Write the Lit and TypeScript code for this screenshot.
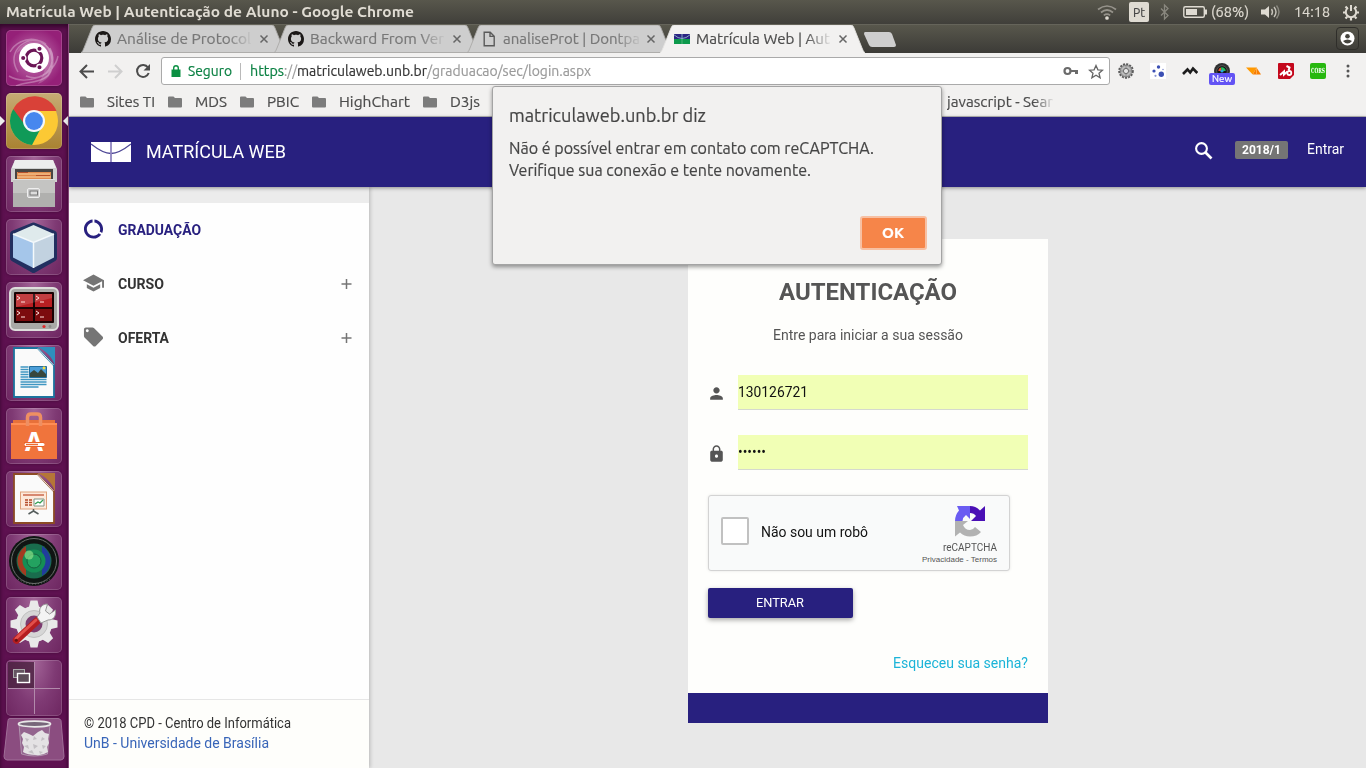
import { LitElement, html, css, svg } from "lit";
import { customElement, property } from "lit/decorators.js";

/** Single-line text set to an exact width; glyphs are condensed or expanded to fill it. */
@customElement("fit-label")
class FitLabel extends LitElement {
  @property({ type: Number }) w = 0;
  @property() text = "";
  static styles = css`
    :host { display: inline-block; flex: none; white-space: nowrap; }
    .box { display: block; }
    .run { display: inline-block; transform-origin: 0 50%; white-space: pre; }
  `;
  render() {
    return html`<span class="box" style="width:${this.w}px"><span class="run">${this.text}</span></span>`;
  }
  updated() {
    const run = this.renderRoot.querySelector(".run") as HTMLElement;
    const natural = run.offsetWidth ? run.getBoundingClientRect().width : 0;
    if (natural && this.w) run.style.transform = `scaleX(${this.w / natural})`;
  }
}

const fit = (text: string, w: number, cls = "") =>
  html`<fit-label class=${cls} .text=${text} .w=${w}></fit-label>`;

const octocat = svg`<path fill="#1b1817" d="M8 0C3.58 0 0 3.58 0 8c0 3.54 2.29 6.53 5.47 7.59.4.07.55-.17.55-.38 0-.19-.01-.82-.01-1.49-2.01.37-2.53-.49-2.69-.94-.09-.23-.48-.94-.82-1.13-.28-.15-.68-.52-.01-.53.63-.01 1.08.58 1.23.82.72 1.21 1.87.87 2.33.66.07-.52.28-.87.51-1.07-1.78-.2-3.64-.89-3.64-3.95 0-.87.31-1.59.82-2.15-.08-.2-.36-1.02.08-2.12 0 0 .67-.21 2.2.82.64-.18 1.32-.27 2-.27s1.36.09 2 .27c1.53-1.04 2.2-.82 2.2-.82.44 1.1.16 1.92.08 2.12.51.56.82 1.27.82 2.15 0 3.07-1.87 3.75-3.65 3.95.29.25.54.73.54 1.48 0 1.07-.01 1.93-.01 2.2 0 .21.15.46.55.38A8.01 8.01 0 0 0 16 8c0-4.42-3.58-8-8-8z"/>`;
const docIcon = svg`<path fill="none" stroke="#5a5a5a" stroke-width="1.4" d="M3.2 1.2h6l4 4v9.6h-10zM9 1.2v4.2h4.2"/>`;
const unbIcon = svg`<path fill="#2b2483" d="M0 3h16v5H0z"/><path fill="#0d9a4c" d="M0 8h16v5H0z"/><path fill="none" stroke="#8fb4cc" stroke-width=".9" d="M0 3.8Q4 7.5 8 7.5T16 3.8M8 3v5"/><path stroke="#7cc79a" stroke-width=".6" d="M8 8v5"/>`;

const tabs = [
  { text: "Análise de Protocol", w: 134, icon: octocat },
  { text: "Backward From Ver", w: 134, icon: octocat },
  { text: "analiseProt | Dontpa", w: 137, icon: docIcon },
  { text: "Matrícula Web | Aut", w: 134, icon: unbIcon, active: true },
];

const bookmarks: [string, number][] = [
  ["Sites TI", 48], ["MDS", 32], ["PBIC", 32], ["HighChart", 71], ["D3js", 30],
];

const extensions = [
  svg`<circle cx="8" cy="8" r="6.8" fill="#b5b5b5" stroke="#5b5b5b" stroke-width="2" stroke-dasharray="2 1.2"/><circle cx="8" cy="8" r="5.6" fill="#bbb" stroke="#858585"/><circle cx="8" cy="8" r="2.6" fill="#e5e5e5" stroke="#666"/><path stroke="#888" d="M8 3v2.5M8 10.500v2.5M3 8h2.500M10.500 8H13"/>`,
  svg`<path fill="#fff" d="M0 0h16v16H0z"/><circle cx="8.500" cy="4" r="1.700" fill="#3c50b4"/><circle cx="4" cy="8" r="1.600" fill="#3c50b4"/><circle cx="11.300" cy="11.200" r="2.700" fill="#3c50b4"/><circle cx="5.500" cy="12.800" r="1.100" fill="#8995d2"/><circle cx="13" cy="6.500" r=".8" fill="#8995d2"/>`,
  svg`<path fill="none" stroke="#1d1d1d" stroke-width="2.600" d="M1 11l4.500-4.500 2.700 3L11 5.500l4.300 4.500"/>`,
  svg`<circle cx="8" cy="8" r="8" fill="#303030"/><circle cx="8" cy="8" r="5.300" fill="#151515" stroke="#777" stroke-width=".6"/><path d="M4.300 8a3.700 3.700 0 0 1 2.500-3.500L8 8z" fill="#e53"/><path d="M6.800 4.500A3.700 3.700 0 0 1 11.700 8H8z" fill="#1fc05a"/><circle cx="8" cy="8" r="1.600" fill="#2aa7e0"/>`,
  svg`<path fill="#f90" d="M0 4.500h10.500L6.700 11.500z"/><path fill="#f97d00" d="M10.500 4.500l4.500 7H6.800z"/><path stroke="#ffbd64" stroke-width=".7" d="M10.500 4.500v7"/>`,
  svg`<path fill="#c4081c" d="M0 1q0-1 1-1h14q1 0 1 1v11l-4 4H1q-1 0-1-1z"/><path fill="none" stroke="#fff" stroke-width="2" d="M2 12l4-3.500v3l3.500-3"/><path fill="none" stroke="#fff" stroke-width="2" d="M8.500 3l3 1.500-1 3"/><circle cx="11.300" cy="10" r="2" fill="none" stroke="#fff" stroke-width="1.800"/>`,
  svg`<rect width="16" height="16" rx="2" fill="#27b80f"/>`,
];

const gearTooth = [0, 45, 90, 135, 180, 225, 270, 315].map((a) => svg`<path transform="rotate(${a} 28 27)" d="M22.500 12l2-8.500h7l2 8.500z"/>`);

const sheet = (edge: string, fold: string) => svg`
  <path fill="#fafafa" stroke="${edge}" stroke-width="1.800" d="M8 3h23.500L48 20.500V52H8z"/>
  <path fill="${fold}" d="M31.500 2H49v18.500C46 12 40 5.500 31.500 2z"/>
  <path stroke="#fff" stroke-width=".8" fill="none" d="M32 3.500l15.500 16.500"/>`;

const launcher = [
  { cls: "dash", art: svg`
    <g fill="none" stroke="#fff" stroke-opacity=".3" stroke-width="1.500"><path d="M4 22C14 4 44 4 46 30S22 50 10 56M12 42C-2 20 24 2 40 14M20 46c20 8 32-14 24-28M3 46C20 56 48 46 52 26"/></g>
    <path fill="#fff" fill-opacity=".18" d="M10 24C18 4 50 8 48 34 46 44 42 50 32 54 52 24 30 4 10 24z"/>
    <circle cx="28" cy="28" r="15" fill="#fff"/><circle cx="28" cy="28" r="7.800" fill="none" stroke="#6b1556" stroke-width="3.200"/>
    <g fill="#6b1556" stroke="#fff" stroke-width="1.300"><circle cx="17.200" cy="28" r="2.700"/><circle cx="33.500" cy="18.800" r="2.700"/><circle cx="33.500" cy="37.200" r="2.700"/></g>` },
  { cls: "chrome", art: svg`
    <circle cx="28" cy="28" r="24" fill="#fcc934"/><path fill="#d94138" d="M28 28L7.200 16A24 24 0 0 1 50.500 18H28z"/>
    <path fill="#109a58" d="M7.200 16A24 24 0 0 0 26 51.900L36 33 28 28z"/><path fill="#d94138" d="M7.200 16L20.500 34 28 18z"/>
    <circle cx="28" cy="28" r="11" fill="#f5f7fa"/><circle cx="28" cy="28" r="8.900" fill="#4787ee"/>` },
  { cls: "", art: svg`
    <path fill="#d0d0d0" d="M9 4h38l4 9v13H5V13z"/><path fill="#ededed" d="M9 4h38l3 8H6z"/><path fill="#484543" d="M9 13h38v12H9z"/>
    <path fill="#e08a4c" d="M11 16h34v8H11z"/><path stroke="#f9d3a0" d="M12 18h32M11 21h34"/><path stroke="#b5502a" d="M12 16.500h10M30 19.500h14"/><path fill="#b0b0ae" d="M7 23h42v28H7z"/><path fill="#c4c4c2" d="M7 23h42v14H7z"/><path stroke="#ddd" d="M7 23.500h42"/>
    <rect x="21.500" y="32.500" width="12" height="9" rx="1.500" fill="#c8c8c8" stroke="#efefef"/><rect x="24" y="35" width="7.500" height="4" fill="#ddd" stroke="#777"/>` },
  { cls: "", art: svg`
    <path fill="#222f60" stroke="#222f60" stroke-width="7" stroke-linejoin="round" d="M27.500 7l20 8v24l-20 11.500L7.500 39V15z"/>
    <path fill="#dfeaec" d="M27.500 6l20.500 9-20.500 8.500L7 15z"/><path fill="#a5c6ea" d="M7 15l20.500 8.500V49L7 38.500z"/><path fill="#c2d2e0" d="M48 15l-20.500 8.500V49L48 38.500z"/><path stroke="#f4f9fc" stroke-width="1.500" fill="none" d="M7 15l20.500 8.500L48 15M27.500 24v25"/>` },
  { cls: "", art: svg`
    <rect x="4" y="6" width="48" height="42" rx="5" fill="#a9a9a6" stroke="#dededc" stroke-width="2"/><rect x="8" y="10" width="40" height="31" rx="1" fill="#190203"/>
    <path fill="#b91f22" d="M10 12h17v13H10zM29 12h17v13H29z"/><path fill="#7c0c0e" d="M10 27h17v12H10zM29 27h17v12H29z"/><path fill="#fff" fill-opacity=".14" d="M10 12h36v4L10 25z"/>
    <path fill="none" stroke="#ffe1dc" d="M11 14l3 2-3 2M15 20h4M30 14l3 2-3 2M34 20h4M11 29l3 2-3 2M15 35h4M30 29l3 2-3 2M34 35h4"/><circle cx="38" cy="44.500" r="1.600" fill="#e02828"/><circle cx="44" cy="44.500" r="1.400" fill="#8b8b88"/>` },
  { cls: "", art: svg`${sheet("#1c739e", "#2f8fbd")}
    <path stroke="#3f96c2" stroke-width="1.500" d="M14.500 22h8M14.500 24.500h8M14.500 27h8M14.500 29.500h8M14.500 32h8M14.500 34.500h26M14.500 37h26M14.500 39.500h26M14.500 42h18"/><path fill="#4b9ed8" stroke="#236d9c" d="M23.500 21.500h17v11h-17z"/><path fill="#37473d" d="M24 32v-4l4-3 4 3 3-4 5 5v3z"/><circle cx="38" cy="23" r="1.400" fill="#f9de3c"/>` },
  { cls: "", art: svg`
    <path fill="#e7713a" d="M7 12h42v6H7z"/><path fill="#f0743c" d="M5 15h46v36H5z"/><path fill="#ff8d55" d="M5 15h46v2H5z"/><path fill="none" stroke="#ee8f62" stroke-width="3.500" d="M21.500 18V9.500q0-3.500 3.500-3.500h6q3.500 0 3.500 3.500V18"/>
    <text x="28" y="43" text-anchor="middle" font-family="Noto Sans, sans-serif" font-weight="700" font-size="26" fill="#fff">A</text><path stroke="#e96328" stroke-width="5" d="M18 36.500h20"/><path stroke="#fff" stroke-width="3" stroke-linecap="round" d="M20 36.500h17"/><path stroke="#ee6c31" stroke-width="1.500" d="M20 36.500h12"/>` },
  { cls: "", art: svg`${sheet("#8c4b25", "#b57638")}
    <rect x="14.500" y="21" width="26" height="17" fill="#fde9db" stroke="#dfa17a"/><path stroke="#be4829" stroke-width="1.200" d="M17 24h21"/><path stroke="#b44b29" stroke-dasharray="3 1" stroke-width="1.300" d="M19 29h7M19 31.500h7M19 34h7"/><path fill="#fff" stroke="#819285" d="M28 28h10v7H28z"/><path fill="none" stroke="#32a052" stroke-width="1.300" d="M29 33l3-2 2 1 3-3"/><path fill="none" stroke="#555d5c" stroke-width="1.500" d="M27.500 38v2l-5 3M27.500 40l5 3"/>` },
  { cls: "", art: svg`
    <circle cx="28" cy="27" r="25" fill="#101513"/><circle cx="28" cy="27" r="22.500" fill="none" stroke="#6a706b" stroke-width="1"/><circle cx="28" cy="27" r="17.500" fill="#196c4d"/>
    <path fill="#a33b20" d="M20 12a17.500 17.500 0 0 0 0 30z"/><path fill="#203c9c" d="M36 12a17.500 17.500 0 0 1 0 30z"/><circle cx="28" cy="27" r="11.500" fill="#158e55"/><circle cx="28" cy="27" r="7" fill="#23a260" stroke="#14603e"/><circle cx="23" cy="21" r="4.500" fill="#8ae087" fill-opacity=".7"/><path d="M12 45q16 10 32 0" fill="none" stroke="#777" stroke-dasharray="1 2"/>` },
  { cls: "", art: svg`
    <g fill="#e9e9e9">${gearTooth}<circle cx="28" cy="27" r="18"/></g><circle cx="28" cy="27" r="13.500" fill="#d6d6d6" stroke="#c0c0c0"/><circle cx="28" cy="27" r="8.500" fill="#7c3c70"/>
    <path stroke="#b51d20" stroke-width="7.500" stroke-linecap="round" d="M10.500 43L31 24"/><path stroke="#e2504b" stroke-width="3" stroke-linecap="round" d="M10 41.500L30 23"/><circle cx="10.300" cy="43.300" r="1.500" fill="#641013"/>
    <path fill="#f4f4f4" stroke="#999" d="M31 20l4 6 7-3c6 0 8-4 7.500-10l-6 4-4-3 2-7c-6 0-9 5-7.500 9z"/>` },
  { cls: "grid", art: svg`
    <path fill="#4a213f" fill-opacity=".8" d="M2 2h26v26H2z"/><path stroke="#b28aab" d="M28.500 2v52M2 28.500h52"/><rect x="7.500" y="9.500" width="11" height="8" fill="#655461" stroke="#aaa"/><rect x="11.500" y="13.500" width="12" height="9" fill="#5e4d5a" stroke="#fff" stroke-width="1.400"/>` },
];

@customElement("app-root")
class AppRoot extends LitElement {
  static styles = css`
    :host { display: grid; grid-template: 24px 744px / 69px 1297px; width: 1366px; height: 768px; overflow: hidden; position: relative;
      font-family: Roboto, "Liberation Sans", sans-serif; font-size: 14px; line-height: 20px; color: #333; }
    * { box-sizing: border-box; }
    svg { display: block; flex: none; }
    .ui { font-family: Ubuntu, "Noto Sans", sans-serif; -webkit-text-stroke: .2px currentColor; }
    .row { display: flex; align-items: center; }

    .panel { grid-column: 1 / 3; background: linear-gradient(#58574c, #403f3a); color: #dfdbd2; padding: 0 7px 0 6px; font-size: 15px; justify-content: space-between; }
    .panel .name { font-weight: 700; -webkit-text-stroke: 0; }
    .status { display: flex; align-items: center; }
    .status svg { overflow: visible; }
    .kbd { width: 20px; height: 20px; margin: 0 10px 0 12px; border-radius: 2px; background: #dfdbd2; color: #444; font-size: 13px; display: grid; place-items: center; }
    .pct { margin-left: 4px; } .vol { margin: 0 13px 0 12px; } .cog { margin-left: 12px; }

    .dock { background: #5e1150; border-right: 1px solid #8b4a7e; padding: 6px 0 0 6px; display: flex; flex-direction: column; gap: 7px; box-shadow: inset 0 3px 4px #34062b; }
    .tile { width: 56px; height: 56px; flex: none; border-radius: 5px; background: radial-gradient(ellipse at 50% 0, #a46699, #7f3a74 55%, #6d2660); box-shadow: inset 0 0 0 1px rgba(255,255,255,.16), 0 0 3px #450b3b; position: relative; }
    .dash { background: radial-gradient(circle, #c57ab4, #952078 75%); }
    .chrome { background: linear-gradient(#c6ab75, #a98231); }
    .pip { position: absolute; top: 23px; }
    .pip.l { left: -6px; } .pip.r { right: -6px; }
    .bin { margin: -5px 0 0 -3px; }

    .browser { display: flex; flex-direction: column; min-width: 0; }
    .strip { height: 29px; flex: none; background: linear-gradient(#58574c, #3c3b37); border-top: 1px solid #65645a; padding: 0 7px 0 12px; display: flex; }
    .tab { width: 205px; margin-right: -12px; display: grid; flex: none; height: 28px; color: #777; font-size: 15px; }
    .tab > * { grid-area: 1 / 1; }
    .tab .in { display: flex; align-items: center; padding: 0 17px 0 14px; gap: 6px; }
    .tab.on { color: #4c4c4c; z-index: 1; }
    .fade { -webkit-mask-image: linear-gradient(90deg, #000 82%, transparent 102%); mask-image: linear-gradient(90deg, #000 82%, transparent 102%); overflow: hidden; }
    .x { margin-left: auto; }
    .newtab { margin: 7px 0 0 10px; }
    .user { margin: 2px 0 0 auto; width: 23px; height: 23px; border: 1px solid #2f2e2a; border-radius: 4px; display: grid; place-items: center; }

    .tools { height: 35px; flex: none; background: #f2f1f0; padding: 0 16px 0 10px; display: flex; align-items: center; }
    .tools > .nav { margin-right: 12px; }
    .tools > .reload { margin-right: 10px; }
    .omni { width: 949px; height: 28px; border: 1px solid #aaa; border-radius: 3px; background: #fff; margin: 1px 8px 0 0; padding: 0 5px 0 9px; color: #9a9a9a; font-size: 15px; flex: none; }
    .green { color: #0b8043; } .dark { color: #333; }
    .sp { width: 7px; }
    .bar { width: 1px; height: 17px; background: #b9b9b9; margin: 0 9px 0 8px; }
    .key { margin-left: auto; margin-right: 9px; }
    .exts { display: flex; gap: 16px; }
    .ext { position: relative; }
    .badge { position: absolute; left: -5px; top: 10px; width: 26px; height: 12px; border-radius: 2px; background: #6353f4; color: #fff; font-size: 10px; line-height: 12px; padding-left: 3px; }
    .cors { position: absolute; left: 1px; top: 3px; font: 700 7px/10px "DejaVu Serif", serif; color: #fff; -webkit-text-stroke: 0; }
    .menu { margin-left: auto; }
    .marks { height: 29px; flex: none; background: #f2f1f0; border-bottom: 1px solid #b8b8b8; padding: 0 0 0 11px; color: #4c4c4c; font-size: 15px; }
    .mark { display: flex; align-items: center; gap: 13px; margin-right: 13px; }
    .last { margin-left: 438px; }

    .page { flex: 1; background: #e8e8e8; display: flex; flex-direction: column; min-height: 0; }
    .head { height: 70px; flex: none; background: #28207f; color: #fff; padding: 0 22px; box-shadow: 0 1px 4px rgba(0,0,0,.4); z-index: 1; }
    .brand { font-size: 18px; margin-left: 15px; }
    .find { margin: -4px 22px 0 auto; }
    .term { width: 53px; height: 18px; background: #757575; border-radius: 2px; font-size: 12px; line-height: 18px; font-weight: 700; padding-left: 7px; margin: -4px 19px 0 0; }
    .login { margin-top: -6px; }
    .body { flex: 1; display: flex; min-height: 0; }
    .side { width: 300px; flex: none; background: #fefefe; border-top: 16px solid #ececec; box-shadow: 1px 0 4px rgba(0,0,0,.22); display: flex; flex-direction: column; }
    .item { height: 54px; padding: 0 17px 2px 14px; font-weight: 700; }
    .item fit-label { margin: 2px 0 0 14px; }
    .item .plus { margin-left: auto; }
    .cur { color: #28207f; }
    .foot { margin-top: auto; height: 69px; border-top: 1px solid #e6e6e6; padding: 13px 15px 0; display: flex; flex-direction: column; align-items: flex-start; background: #fefefb; }
    .foot .unb { color: #3865b8; }
    .main { flex: 1; padding: 52px 0 0 319px; }
    .card { width: 360px; height: 484px; background: #fefefc; border-bottom: 30px solid #28207f; padding: 36px 20px 0; display: flex; flex-direction: column; align-items: flex-start; color: #555; }
    .h1 { align-self: center; font-size: 24px; line-height: 34px; font-weight: 700; margin-left: -1px; }
    .sub { align-self: center; margin: 16px 0 30px -1px; }
    .field { display: flex; align-items: center; gap: 13px; height: 35px; margin-bottom: 25px; }
    .field > svg { margin-top: 2px; }
    .input { width: 290px; height: 35px; background: #f1ffb5; border-bottom: 1px solid #d5d9cf; color: #111; padding-top: 7px; }
    .captcha { width: 302px; height: 76px; border: 1px solid #d3d3d3; border-radius: 3px; background: #f9fafa; box-shadow: 0 0 3px rgba(0,0,0,.1); display: flex; padding: 0 12px; align-items: center; color: #111; }
    .check { width: 28px; height: 28px; border: 2px solid #c1c1c1; border-radius: 2px; background: #fff; margin-right: 12px; margin-top: -4px; }
    .robot { margin-top: -2px; }
    .rc { margin-left: auto; display: flex; flex-direction: column; align-items: flex-end; color: #555; height: 76px; padding-top: 10px; }
    .rc svg { margin-right: 11px; }
    .rcn { font-size: 10px; line-height: 13px; margin-top: 4px; }
    .rcp { font: 8px/11px "Liberation Sans", sans-serif; }
    .go { width: 145px; height: 30px; background: #28207f; border-radius: 2px; color: #fff; font-size: 13px; display: grid; place-items: center; margin: 17px 0 35px; padding-right: 1px; box-shadow: 0 2px 5px rgba(0,0,0,.35); }
    .forgot { align-self: flex-end; color: #1cb4d8; }

    .dialog { position: absolute; z-index: 5; left: 492px; top: 86px; width: 450px; height: 179px; background: #f2f1f0; border: 1px solid #a4a4a4; border-radius: 3px; box-shadow: 0 2px 4px rgba(0,0,0,.4); padding: 16px; display: flex; flex-direction: column; align-items: flex-start; color: #454545; font-size: 16px; line-height: 22px; }
    .dialog .t { font-size: 19px; line-height: 24px; margin-bottom: 10px; }
    .ok { align-self: flex-end; margin: auto -2px -2px 0; width: 67px; height: 34px; border: 2px solid #f7c0a3; border-radius: 3px; background: #f68549; color: #fff; font-size: 14px; font-weight: 700; display: grid; place-items: center; padding-right: 1px; }
  `;

  tab(t: any) {
    const fill = t.active ? "#f2f1f0" : "#cecece";
    return html`<div class="tab ${t.active ? "on" : ""}">
      <svg width="205" height="28"><path d="M0 28Q2 26 3 23L11 3Q12 0 14 0H191Q193 0 194 3L202 23Q203 26 205 28z" fill=${fill}/>
        <path d="M0 28Q2 26 3 23L11 3Q12 0 14 0H191Q193 0 194 3L202 23Q203 26 205 28${t.active ? "" : "M0 27.500H205"}" fill="none" stroke=${t.active ? "#e4e3e1" : "#aaa9a7"} stroke-width=".9"/></svg>
      <div class="in"><svg width="16" height="16" viewBox="0 0 16 16">${t.icon}</svg>${fit(t.text, t.w, "fade")}
      <svg class="x" width="10" height="10"><path d="M1.500 1.500l7 7m0-7l-7 7" stroke="#666" stroke-width="1.500"/></svg></div></div>`;
  }

  item(label: string, w: number, icon: any, current = false) {
    return html`<div class="item row ${current ? "cur" : ""}">
      <svg width="21" height="22" viewBox="1 1 22 22" fill=${current ? "#28207f" : "#757575"}>${icon}</svg>${fit(label, w)}
      ${current ? "" : html`<svg class="plus" width="11" height="11"><path d="M5.500 1v10M.5 6h10" stroke="#757575" stroke-width="1.500"/></svg>`}</div>`;
  }

  extension(art: any, i: number) {
    return html`<div class="ext"><svg width="16" height="16" viewBox="0 0 16 16">${art}</svg>
      ${i === 3 ? html`<div class="badge">${fit("New", 20)}</div>` : ""}${i === 6 ? html`<div class="cors">${fit("CORS", 14)}</div>` : ""}</div>`;
  }

  render() {
    return html`
      <div class="panel ui row">
        ${fit("Matrícula Web | Autenticação de Aluno - Google Chrome", 408, "name")}
        <div class="status">
          <svg width="20" height="16" fill="none" stroke="#96938b" stroke-width="1.700"><path d="M1 5.500q9-7 18 0M4 8.500q6-5 12 0M6.800 11.300q3.200-2.500 6.400 0"/><circle cx="10" cy="14" r="1" fill="#dfdbd2" stroke="#dfdbd2"/></svg>
          <div class="kbd">${fit("Pt", 12)}</div>
          <svg width="12" height="16" fill="none" stroke="#8a887f" stroke-width="1.300"><path d="M2 4.500l7 7-3.500 3.500V1L9 4.500l-7 7"/></svg>
          <svg width="36" height="14" viewBox="-12 0 36 14"><rect x=".8" y="1.800" width="20.500" height="10.400" rx="1.500" fill="none" stroke="#dfdbd2" stroke-width="1.400"/><path fill="#dfdbd2" d="M3 4h11v6H3zM22 4.500h2v5h-2z"/></svg>
          ${fit("(68%)", 38, "pct")}
          <svg class="vol" width="20" height="16"><path fill="#dfdbd2" d="M0 5.500h4L8 2v12L4 10.500H0z"/><path fill="none" stroke="#c6c3ba" stroke-width="1.400" d="M10.500 5q2 3 0 6M13 3q4 5 0 10"/><path fill="none" stroke="#8a887f" stroke-width="1.400" d="M15.500 1.500q5 6.500 0 13"/></svg>
          ${fit("14:18", 36)}
          <svg class="cog" width="17" height="18" fill="none" stroke="#dfdbd2"><path stroke-width="2" d="M6 4.800A5.200 5.200 0 1 0 12 4.800"/><path stroke-width="2" d="M9 2v6"/><path stroke-width="2.200" d="M3.500 3.500l1.700 1.700M14.500 3.500l-1.700 1.700M1 9.500h2.500M14.500 9.500H17M3.500 15.500l1.700-1.700M14.500 15.500l-1.700-1.700M9 15v2.500"/></svg>
        </div>
      </div>

      <div class="dock">
        ${launcher.map((l) => html`<div class="tile ${l.cls}"><svg width="56" height="56" viewBox="0 0 56 56">${l.art}</svg>
          ${l.cls === "chrome" ? html`<svg class="pip l" width="5" height="10"><path fill="#eee" d="M0 0l5 5-5 5z"/></svg><svg class="pip r" width="5" height="10"><path fill="#eee" d="M5 0L0 5l5 5z"/></svg>` : ""}</div>`)}
        <svg class="bin" width="62" height="43"><path fill="#8b4d80" stroke="#a06f98" d="M7 .5h48q2 0 3 2l3 36q0 3-3 3.500H4q-3-.5-3-3.500l4-36q0-2 2-2z"/>
          <path fill="#9a7597" fill-opacity=".6" stroke="#b9a3b8" stroke-width=".8" d="M16 6h31l-2.500 30q-13 4-26 0z"/><ellipse cx="31.500" cy="6" rx="16" ry="2.800" fill="#77667a" stroke="#e8e8e8" stroke-width="1.700"/>
          <path fill="#e4e2e4" d="M18 17l3-3 5 2 4 2 5-4 4-2 3 3 4 1-1 5 1 4-2 4 1 5q-6 4-12 3-9 0-13-3l1-5-2-4 1-4z"/><g fill="#c3c0c4"><path d="M22 20l4 1-2 3zM31 18l3 3-4 1zM39 19l3 2-4 2zM21 28l4-1 1 4zM30 26l5 2-4 3zM39 27l4 1-3 3zM25 34l4-2 2 4zM36 33l4 1-3 2z"/></g></svg>
      </div>

      <div class="browser">
        <div class="strip ui">${tabs.map((t) => this.tab(t))}
          <svg class="newtab" width="34" height="15"><path fill="#cecece" d="M2 0h24q2 0 3 2l4 11q0 2-2 2H9q-2 0-3-2L1 2q0-2 1-2z"/></svg>
          <div class="user"><svg width="15" height="15"><circle cx="7.500" cy="7.500" r="7" fill="#fff"/><circle cx="7.500" cy="5.200" r="2.300" fill="#45443e"/><path fill="#45443e" d="M3 10q4.500-3 9 0-4.500 5-9 0z"/></svg></div>
        </div>
        <div class="tools ui">
          <svg class="nav" width="16" height="16" fill="none" stroke="#4c4c4c" stroke-width="2"><path d="M15 8.500H2M8 2L1.500 8.500 8 15"/></svg>
          <svg class="nav" width="16" height="16" fill="none" stroke="#cfcfcf" stroke-width="2"><path d="M1 8.500h13M8 2l6.500 6.500L8 15"/></svg>
          <svg class="reload" width="16" height="16"><path fill="none" stroke="#4c4c4c" stroke-width="2" d="M13 4.500A6 6 0 1 0 13.700 10"/><path fill="#4c4c4c" d="M15 1v6.500H8.500z"/></svg>
          <div class="omni row">
            <svg width="10" height="12"><path fill="#0b9043" d="M.5 4.500h9V12h-9z"/><path fill="none" stroke="#0b9043" stroke-width="1.400" d="M2.700 5V3a2.300 2.300 0 0 1 4.600 0v2"/></svg>
            <span class="sp"></span>${fit("Seguro", 44, "green")}<span class="bar"></span>
            ${fit("https", 34, "green")}${fit("://", 13)}${fit("matriculaweb.unb.br", 130, "dark")}${fit("/graduacao/sec/login.aspx", 164)}
            <svg class="key" width="16" height="10"><circle cx="4.500" cy="5" r="3" fill="none" stroke="#6b6b6b" stroke-width="2.200"/><path fill="#6b6b6b" d="M7 4h8v4h-3V6H7z"/></svg>
            <svg width="16" height="15" viewBox="0 0 16 15"><path fill="none" stroke="#666" stroke-width="1.300" d="M8 1.500l1.900 4.300 4.600.4-3.500 3 1.100 4.600L8 11.300l-4.100 2.500L5 9.200l-3.500-3 4.600-.4z"/></svg>
          </div>
          <div class="exts">${extensions.map((e, i) => this.extension(e, i))}</div>
          <svg class="menu" width="4" height="14" fill="#555"><circle cx="2" cy="2" r="1.500"/><circle cx="2" cy="7" r="1.500"/><circle cx="2" cy="12" r="1.500"/></svg>
        </div>
        <div class="marks ui row">
          ${bookmarks.map(([t, w]) => html`<div class="mark"><svg width="14" height="12"><path fill="#7c7c7c" d="M0 1.500Q0 .5 1 .5h4.500L7 2h6q1 0 1 1v7.500q0 1-1 1H1q-1 0-1-1z"/></svg>${fit(t, w)}</div>`)}
          <svg width="16" height="16" viewBox="0 0 16 16">${octocat}</svg>
          ${fit("javascript - Sear", 106, "last fade")}
        </div>
        <div class="page">
          <div class="head row">
            <svg width="40" height="20"><path fill="#fff" d="M0 0h40v20H0z"/><path fill="none" stroke="#4d4796" stroke-width="1.300" d="M0 2Q12 11.500 20 11.500T40 2"/><path stroke="#8f85c0" stroke-width="1.800" d="M20 0v20"/></svg>
            ${fit("MATRÍCULA WEB", 140, "brand")}
            <svg class="find" width="19" height="19" fill="none" stroke="#fff"><circle cx="7.500" cy="7.500" r="5.400" stroke-width="2.100"/><path stroke-width="2.700" d="M11.500 11.500l6 6"/></svg>
            <div class="term">${fit("2018/1", 39)}</div>${fit("Entrar", 37, "login")}
          </div>
          <div class="body">
            <div class="side">
              ${this.item("GRADUAÇÃO", 83, svg`<path d="M13 2.050v3.030c3.390.49 6 3.390 6 6.920 0 .9-.18 1.750-.48 2.540l2.600 1.530c.56-1.240.88-2.620.88-4.070 0-5.180-3.950-9.450-9-9.950zM12 19c-3.870 0-7-3.130-7-7 0-3.530 2.610-6.430 6-6.920V2.050c-5.060.5-9 4.760-9 9.950 0 5.520 4.470 10 9.990 10 3.310 0 6.240-1.610 8.060-4.090l-2.600-1.530C16.170 17.980 14.210 19 12 19z"/>`, true)}
              ${this.item("CURSO", 46, svg`<path d="M5 13.180v4L12 21l7-3.820v-4L12 17l-7-3.820zM12 3L1 9l11 6 9-4.910V17h2V9L12 3z"/>`)}
              ${this.item("OFERTA", 51, svg`<path d="M21.410 11.580l-9-9C12.050 2.220 11.550 2 11 2H4c-1.100 0-2 .9-2 2v7c0 .55.22 1.050.59 1.420l9 9c.36.360.86.580 1.410.580.55 0 1.050-.22 1.410-.59l7-7c.37-.36.59-.86.59-1.410 0-.55-.23-1.060-.59-1.420zM5.500 7C4.670 7 4 6.330 4 5.500S4.670 4 5.500 4 7 4.670 7 5.500 6.330 7 5.500 7z"/>`)}
              <div class="foot">${fit("© 2018 CPD - Centro de Informática", 207)}${fit("UnB - Universidade de Brasília", 185, "unb")}</div>
            </div>
            <div class="main">
              <div class="card">
                ${fit("AUTENTICAÇÃO", 178, "h1")}${fit("Entre para iniciar a sua sessão", 190, "sub")}
                <div class="field"><svg width="17" height="17" viewBox="1.300 1.300 21.400 21.400" fill="#555"><path d="M12 12c2.210 0 4-1.790 4-4s-1.790-4-4-4-4 1.790-4 4 1.790 4 4 4zm0 2c-2.670 0-8 1.340-8 4v2h16v-2c0-2.660-5.330-4-8-4z"/></svg><div class="input">${fit("130126721", 70)}</div></div>
                <div class="field"><svg width="17" height="18" viewBox="1.200 .8 21.600 22.900" fill="#555"><path d="M18 8h-1V6c0-2.760-2.240-5-5-5S7 3.240 7 6v2H6c-1.100 0-2 .9-2 2v10c0 1.100.9 2 2 2h12c1.100 0 2-.9 2-2V10c0-1.100-.9-2-2-2zm-6 9c-1.100 0-2-.9-2-2s.9-2 2-2 2 .9 2 2-.9 2-2 2zm3.100-9H8.900V6c0-1.710 1.390-3.100 3.100-3.100 1.710 0 3.100 1.390 3.100 3.100v2z"/></svg><div class="input pw">${fit("••••••", 28)}</div></div>
                <div class="captcha"><div class="check"></div>${fit("Não sou um robô", 107, "robot")}
                  <div class="rc"><svg width="32" height="32" viewBox="0 0 32 32"><path fill="#4a0fb5" d="M16 1q6 0 10 4.500L31 1v15H17l5-5q-2-3-6-3z"/><path fill="#6a5cf2" d="M16 1v13l-4-4q-3 2-3.500 6H1Q1 10 5 5.500L3 1z"/><path fill="#b2b2b2" d="M1 16h13l-5 4q2 5 7 5 3 0 5-3l6 5q-4 4.500-11 4.500-6 0-10-4l-5 4z"/></svg>
                  ${fit("reCAPTCHA", 54, "rcn")}${fit("Privacidade - Termos", 75, "rcp")}</div></div>
                <div class="go">${fit("ENTRAR", 48)}</div>
                ${fit("Esqueceu sua senha?", 135, "forgot")}
              </div>
            </div>
          </div>
        </div>
      </div>

      <div class="dialog ui">
        ${fit("matriculaweb.unb.br diz", 197, "t")}
        ${fit("Não é possível entrar em contato com reCAPTCHA.", 365)}
        ${fit("Verifique sua conexão e tente novamente.", 302)}
        <div class="ok">${fit("OK", 22)}</div>
      </div>`;
  }
}
